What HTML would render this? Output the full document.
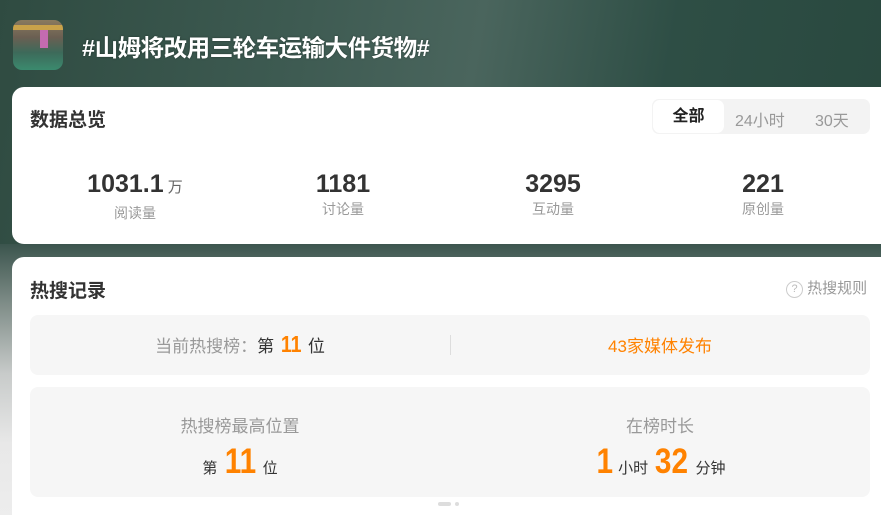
<!DOCTYPE html>
<html style="width:881px;height:515px;overflow:hidden"><head><meta charset="utf-8"><style>
*{margin:0;padding:0;box-sizing:border-box}
body{width:881px;height:515px;overflow:hidden;position:relative;font-family:"Liberation Sans","Noto Sans CJK SC",sans-serif;background:#eee}
.bg{position:absolute;left:0;top:0;width:881px;height:515px;background:linear-gradient(100deg,#2f4b41 0%,#3d5a51 30%,#4a655d 50%,#2e4e45 70%,#28473d 100%)}
.fade{position:absolute;left:0;top:244px;width:881px;height:271px;background:linear-gradient(180deg,rgba(60,85,78,0.95) 0,#7f8d88 60px,#c8cbca 130px,#e8e8e8 200px,#ededed 271px)}
.av{position:absolute;left:13px;top:20px;width:50px;height:50px;border-radius:9px;background:linear-gradient(180deg,#8a7a5e 0,#6a5f52 35%,#3d6a5a 65%,#3b8a6e 100%);overflow:hidden}
.av:before{content:"";position:absolute;left:27px;top:10px;width:8px;height:18px;background:#c46bb0}
.av:after{content:"";position:absolute;left:0;top:5px;width:50px;height:5px;background:#c9a24a}
.title{position:absolute;left:82px;top:29px;color:#fff;font-size:23.5px;font-weight:bold;letter-spacing:-0.5px;text-shadow:0 0 2px rgba(0,0,0,.4)}
.card{position:absolute;left:12px;width:885px;background:#fff;border-radius:12px;overflow:hidden}
.c1{top:87px;height:157px}
.c2{top:257px;height:258px;border-bottom-left-radius:0;border-bottom-right-radius:0}
.h{position:absolute;left:18px;font-size:19px;font-weight:bold;color:#333}
.tabs{position:absolute;left:640px;top:12px;width:218px;height:35px;background:#f3f3f3;border-radius:7px;font-size:16px;color:#999}
.tabs .on{position:absolute;left:1px;top:1px;width:71px;height:33px;background:#fff;border-radius:7px;color:#222;text-align:center;line-height:33px;font-weight:bold}
.stat{position:absolute;top:82px;width:200px;text-align:center}
.stat b{display:block;font-size:25px;color:#333;line-height:30px}
.stat b small{font-size:15px;font-weight:normal;color:#666}
.stat span{display:block;font-size:14px;color:#999;line-height:20px}
.box{position:absolute;left:18px;width:840px;background:#f6f6f6;border-radius:8px}
.or{color:#ff8200}
.big{font-weight:bold;color:#ff8200;font-family:"Liberation Sans",sans-serif;display:inline-block;transform:scaleX(.85)}
</style></head><body>
<div class="bg"></div><div class="fade"></div>
<div class="av"></div>
<div class="title">#山姆将改用三轮车运输大件货物#</div>
<div class="card c1">
 <div class="h" style="top:18px">数据总览</div>
 <div class="tabs"><div class="on">全部</div><span style="position:absolute;left:83px;top:8px">24小时</span><span style="position:absolute;left:163px;top:8px">30天</span></div>
 <div class="stat" style="left:23px"><b>1031.1<small> 万</small></b><span>阅读量</span></div>
 <div class="stat" style="left:231px"><b>1181</b><span>讨论量</span></div>
 <div class="stat" style="left:441px"><b>3295</b><span>互动量</span></div>
 <div class="stat" style="left:651px"><b>221</b><span>原创量</span></div>
</div>
<div class="card c2">
 <div class="h" style="top:19px">热搜记录</div>
 <div style="position:absolute;left:774px;top:20px;font-size:15px;color:#999"><span style="display:inline-block;width:17px;height:17px;border:1.5px solid #ccc;border-radius:50%;font-size:11px;line-height:14px;text-align:center;color:#bbb;vertical-align:1px">?</span> 热搜规则</div>
 <div class="box" style="top:58px;height:60px">
  <div style="position:absolute;left:0;width:420px;top:17px;text-align:center;font-size:17px;color:#999">当前热搜榜：<span style="color:#333">第 <span class="big" style="font-size:23px;line-height:20px">11</span> 位</span></div>
  <div style="position:absolute;left:420px;top:20px;width:1px;height:20px;background:#ddd"></div>
  <div style="position:absolute;left:420px;width:420px;top:17px;text-align:center;font-size:17px" class="or">43家媒体发布</div>
 </div>
 <div class="box" style="top:130px;height:110px">
  <div style="position:absolute;left:0;width:420px;top:25px;text-align:center;font-size:17px;color:#999">热搜榜最高位置</div>
  <div style="position:absolute;left:0;width:420px;top:55px;text-align:center;font-size:15px;color:#333">第 <span class="big" style="font-size:35px">11</span> 位</div>
  <div style="position:absolute;left:420px;width:420px;top:25px;text-align:center;font-size:17px;color:#999">在榜时长</div>
  <div style="position:absolute;left:420px;width:420px;top:55px;text-align:center;font-size:15px;color:#333"><span class="big" style="font-size:35px">1</span> 小时 <span class="big" style="font-size:35px">32</span> 分钟</div>
 </div>
 <div style="position:absolute;left:426px;top:245px;width:13px;height:4px;border-radius:2px;background:#ddd"></div>
 <div style="position:absolute;left:443px;top:245px;width:4px;height:4px;border-radius:2px;background:#ddd"></div>
</div>
</body></html>
